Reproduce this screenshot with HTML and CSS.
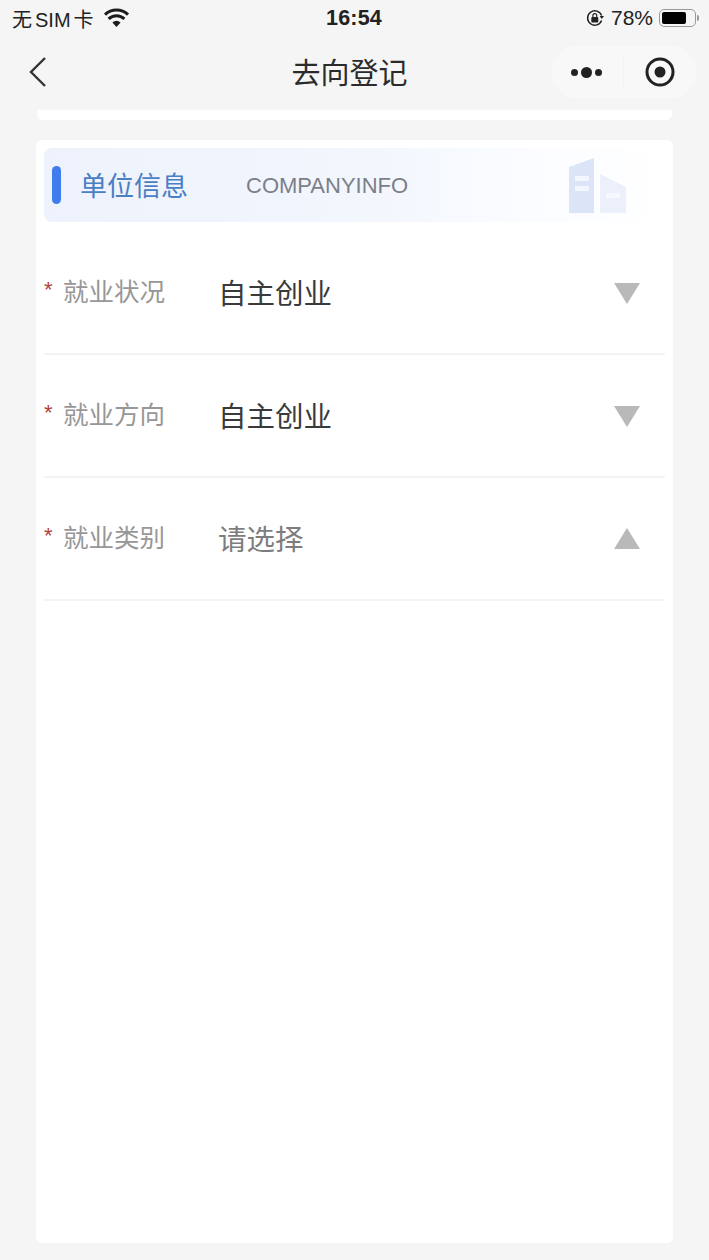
FILE: index.html
```html
<!DOCTYPE html>
<html>
<head>
	<title>去向登记</title>
	<meta charset="utf-8">
	<link rel="stylesheet" href="styles.css">
</head>
<body>
<!-- status bar -->
<div class="statusBar">
	<div class="statusLeft">
		<span>无<span class="sim">SIM</span>卡</span>
		<svg class="wifi" width="27" height="20" viewBox="0 0 27 20">
			<path d="M13.5 19 L9.4 14.4 A6.4 6.4 0 0 1 17.6 14.4 Z" fill="#1c1c1c"/>
			<path d="M5.6 10.8 A11.6 11.6 0 0 1 21.4 10.8" fill="none" stroke="#1c1c1c" stroke-width="3"/>
			<path d="M2 6.6 A16.6 16.6 0 0 1 25 6.6" fill="none" stroke="#1c1c1c" stroke-width="3"/>
		</svg>
	</div>
	<div class="statusTime">16:54</div>
	<div class="statusRight">
		<svg width="20" height="20" viewBox="0 0 20 20">
			<path d="M16.6 7.5 A7.2 7.2 0 1 0 16.6 12.5" fill="none" stroke="#222" stroke-width="1.5"/>
			<path d="M14.6 8 L19 8 L16.8 11 Z" fill="#222"/>
			<rect x="6.3" y="9" width="7" height="5.4" rx="1" fill="#222"/>
			<path d="M7.9 9 V7.6 A1.9 1.9 0 0 1 11.7 7.6 V9" fill="none" stroke="#222" stroke-width="1.2"/>
		</svg>
		<span class="percent">78%</span>
		<div class="battery"><div class="batteryLevel"></div></div>
		<div class="batteryCap"></div>
	</div>
</div>

<!-- navigation -->
<div class="navBar">
	<svg class="back" width="20" height="32" viewBox="0 0 20 32">
		<path d="M17 2 L3 16 L17 30" fill="none" stroke="#333" stroke-width="2.4"/>
	</svg>
	<div class="navTitle">去向登记</div>
	<div class="capsule">
		<div class="capsuleDots"><i class="dot"></i><i class="dot dotBig"></i><i class="dot"></i></div>
		<div class="capsuleLine"></div>
		<svg width="32" height="32" viewBox="0 0 32 32">
			<circle cx="16" cy="16" r="13" fill="none" stroke="#222" stroke-width="3"/>
			<circle cx="16" cy="16" r="5.5" fill="#222"/>
		</svg>
	</div>
</div>

<div class="prevCard"></div>

<!-- main card -->
<div class="card">
	<div class="titleBar">
		<div class="titleMark"></div>
		<div class="titleText">单位信息</div>
		<div class="titleEn">COMPANYINFO</div>
		<svg class="titleIcon" width="60" height="58" viewBox="0 0 60 58">
			<path d="M1 10 L26 1 V56 H1 Z" fill="#dce5f7"/>
			<path d="M32 17 L58 30 V56 H32 Z" fill="#ebf0fa"/>
			<rect x="7" y="19" width="14" height="5" fill="#f3f6fd"/>
			<rect x="7" y="29" width="14" height="5" fill="#f3f6fd"/>
			<rect x="38" y="36" width="14" height="5" fill="#f6f8fd"/>
		</svg>
	</div>

	<div class="formRow firstRow">
		<div class="label"><span class="star">*</span>就业状况</div>
		<div class="value">自主创业</div>
		<div class="arrow arrowDown"></div>
	</div>
	<div class="formRow">
		<div class="label"><span class="star">*</span>就业方向</div>
		<div class="value">自主创业</div>
		<div class="arrow arrowDown"></div>
	</div>
	<div class="formRow">
		<div class="label"><span class="star">*</span>就业类别</div>
		<div class="value placeholder">请选择</div>
		<div class="arrow arrowUp"></div>
	</div>
</div>
</body>
</html>
```

FILE: styles.css
```css
html,body{
	padding: 0;
	margin: 0;
	height: 100%;
}

body{
	background-color: #f5f5f5;
	color: #333;
	font-family: "Liberation Sans", "Noto Sans CJK SC", sans-serif;
	overflow: hidden;
}

.statusBar{
	height: 36px;
	padding: 0 10px 0 12px;
	display: flex;
	align-items: center;
	justify-content: space-between;
	font-size: 20px;
	color: #222;
}
.statusLeft{
	width: 240px;
	display: flex;
	align-items: center;
	gap: 9px;
}
.sim{
	margin: 0 3px;
	letter-spacing: 0;
}
.statusTime{
	font-weight: 700;
	font-size: 21.5px;
	letter-spacing: 0.2px;
	margin-left: -3px;
}
.statusRight{
	width: 240px;
	display: flex;
	align-items: center;
	justify-content: flex-end;
}
.percent{
	margin-left: 6px;
	margin-right: 6px;
	font-size: 21px;
}
.battery{
	width: 37px;
	height: 18px;
	box-sizing: border-box;
	border: 1px solid #999;
	border-radius: 5px;
	padding: 2px;
}
.batteryLevel{
	width: 78%;
	height: 100%;
	background-color: #000;
	border-radius: 2px;
}
.batteryCap{
	width: 2px;
	height: 6px;
	margin-left: 1px;
	background-color: #999;
	border-radius: 0 2px 2px 0;
}

.navBar{
	height: 74px;
	padding: 0 12px 0 28px;
	display: flex;
	align-items: center;
	position: relative;
}
.back{
	margin-top: -2px;
}
.navTitle{
	position: absolute;
	left: 0;
	right: 10px;
	top: 20px;
	text-align: center;
	font-size: 29px;
	line-height: 36px;
	color: #2b2b2b;
}
.capsule{
	margin-left: auto;
	width: 146px;
	height: 52px;
	margin-top: -2px;
	border-radius: 26px;
	background-color: #f8f8f8;
	display: flex;
	align-items: center;
	box-sizing: border-box;
	padding: 0 20px 0 20px;
}
.capsuleDots{
	display: flex;
	align-items: center;
	gap: 3px;
}
.dot{
	width: 7px;
	height: 7px;
	border-radius: 50%;
	background-color: #222;
}
.dotBig{
	width: 11px;
	height: 11px;
}
.capsuleLine{
	width: 1px;
	height: 36px;
	margin-left: 21px;
	margin-right: 20px;
	background-color: #f3f3f3;
}

.prevCard{
	height: 10px;
	margin: 0 37px;
	background-color: #fff;
	border-radius: 0 0 6px 6px;
}

.card{
	margin: 20px 36px 0;
	height: 1103px;
	padding: 8px 8px 0;
	box-sizing: border-box;
	background-color: #fff;
	border-radius: 6px;
}

.titleBar{
	height: 74px;
	display: flex;
	align-items: center;
	position: relative;
	border-radius: 8px;
	background: linear-gradient(90deg, #edf2fc 0%, #f2f6fd 50%, #fafcff 78%, #fff 100%);
}
.titleMark{
	width: 9px;
	height: 38px;
	margin-left: 8px;
	border-radius: 5px;
	background-color: #3f7cec;
}
.titleText{
	margin-left: 19px;
	font-size: 27px;
	line-height: 34px;
	margin-top: 4px;
	color: #4a7fc4;
	width: 166px;
}
.titleEn{
	font-size: 22px;
	color: #7b7f88;
	margin-top: 2px;
}
.titleIcon{
	position: absolute;
	left: 524px;
	top: 9px;
}

.formRow{
	height: 123px;
	display: flex;
	align-items: center;
	border-bottom: 2px solid #f3f3f3;
	box-sizing: border-box;
	width: 621px;
}
.firstRow{
	margin-top: 10px;
}
.label{
	width: 174px;
	font-size: 25.5px;
	color: #979797;
	display: flex;
	align-items: center;
	margin-top: -6px;
}
.star{
	width: 19px;
	color: #b5403c;
	font-size: 22px;
}
.value{
	flex: 1;
	font-size: 28.5px;
	color: #3a3a3a;
	margin-top: -2px;
}
.placeholder{
	color: #7d7d7d;
}
.arrow{
	width: 0;
	height: 0;
	margin-right: 25px;
	border-left: 13px solid transparent;
	border-right: 13px solid transparent;
}
.arrowDown{
	margin-top: 2px;
	border-top: 21px solid #b9b9b9;
}
.arrowUp{
	border-bottom: 21px solid #b9b9b9;
}
```
